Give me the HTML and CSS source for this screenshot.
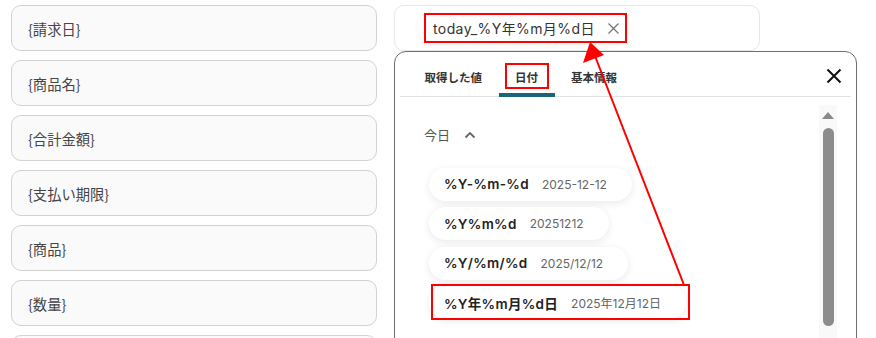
FILE: index.html
```html
<!DOCTYPE html>
<html lang="ja">
<head>
    <meta charset="UTF-8">
    <title>日付フォーマット</title>
    <link rel="stylesheet" href="styles.css">
</head>
<body>
    <div class="page">
        <div class="fields">
            <div class="field">{請求日}</div>
            <div class="field">{商品名}</div>
            <div class="field">{合計金額}</div>
            <div class="field">{支払い期限}</div>
            <div class="field">{商品}</div>
            <div class="field">{数量}</div>
            <div class="field"></div>
        </div>

        <div class="right">
            <div class="value-input">
                <span class="token">today_%Y年%m月%d日
                    <svg width="11" height="11" viewBox="0 0 11 11"><path d="M0.5 0.5 L10.5 10.5 M10.5 0.5 L0.5 10.5" stroke="#777" stroke-width="1.3" fill="none"/></svg>
                </span>
            </div>

            <div class="picker">
                <div class="tabs">
                    <div class="tab">取得した値</div>
                    <div class="tab active">日付</div>
                    <div class="tab">基本情報</div>
                    <button class="close" aria-label="閉じる">
                        <svg width="16" height="16" viewBox="0 0 16 16"><path d="M1.5 1.5 L14.5 14.5 M14.5 1.5 L1.5 14.5" stroke="#111" stroke-width="2" fill="none"/></svg>
                    </button>
                </div>
                <div class="picker-body">
                    <div class="list">
                        <div class="group-title">今日
                            <svg width="12" height="8" viewBox="0 0 12 8"><path d="M1.5 6.5 L6 2 L10.5 6.5" stroke="#666" stroke-width="1.8" fill="none"/></svg>
                        </div>
                        <div class="chip"><b>%Y-%m-%d</b><span>2025-12-12</span></div>
                        <div class="chip"><b>%Y%m%d</b><span>20251212</span></div>
                        <div class="chip"><b>%Y/%m/%d</b><span>2025/12/12</span></div>
                        <div class="chip"><b>%Y年%m月%d日</b><span>2025年12月12日</span></div>
                    </div>
                    <div class="scrollbar">
                        <div class="scroll-up"></div>
                        <div class="scroll-thumb"></div>
                    </div>
                </div>
            </div>
        </div>
    </div>

    <!-- annotations drawn over the screenshot -->
    <div class="mark mark-token"></div>
    <div class="mark mark-tab"></div>
    <div class="mark mark-chip"></div>
    <svg class="arrow" width="876" height="338" viewBox="0 0 876 338">
        <line x1="684" y1="285" x2="595" y2="56" stroke="#f00" stroke-width="2"/>
        <polygon points="590,42 604,55 583,63" fill="#f00"/>
    </svg>
</body>
</html>
```

FILE: styles.css
```css
body {
    margin: 0;
    height: 338px;
    overflow: hidden;
    background: #fff;
    font-family: Inter, "Noto Sans CJK JP", sans-serif;
    color: #333;
    position: relative;
}

.page {
    display: flex;
    align-items: flex-start;
    gap: 17px;
    padding: 5px 0 0 11px;
}

.fields {
    width: 366px;
    display: flex;
    flex-direction: column;
    gap: 9px;
}

.field {
    height: 46px;
    box-sizing: border-box;
    flex-shrink: 0;
    padding-left: 16px;
    display: flex;
    align-items: center;
    background: #fafafa;
    border: 1px solid #d2d2d2;
    border-radius: 10px;
    font-family: "Noto Sans CJK JP", sans-serif;
    font-size: 14.3px;
    color: #444;
}

.right {
    width: 463px;
    display: flex;
    flex-direction: column;
}

.value-input {
    width: 366px;
    height: 46px;
    box-sizing: border-box;
    border: 1px solid #e6e6e6;
    border-radius: 10px;
    display: flex;
    align-items: center;
    padding-left: 23px;
}

.token {
    display: flex;
    align-items: center;
    gap: 13px;
    height: 32px;
    padding: 0 10px 0 15px;
    border-radius: 16px;
    box-shadow: 0 1px 6px rgba(0, 0, 0, 0.06);
    font-size: 14px;
    letter-spacing: 0.4px;
    color: #333;
}

.picker {
    height: 300px;
    box-sizing: border-box;
    border: 1px solid #6e6e6e;
    border-radius: 12px;
    padding: 0 5px;
}

.tabs {
    display: flex;
    align-items: flex-end;
    height: 44px;
    padding-left: 8px;
    border-bottom: 1px solid #e2e2e2;
    position: relative;
}

.tab {
    padding: 0 16.5px 8px;
    font-size: 11.5px;
    font-weight: 600;
    color: #333;
    border-bottom: 4px solid transparent;
    margin-bottom: -1px;
}

.tab.active {
    border-bottom-color: #1b6378;
    border-radius: 3px 3px 0 0;
}

.close {
    position: absolute;
    right: 9px;
    top: 16px;
    background: none;
    border: none;
    padding: 0;
    width: 16px;
    height: 16px;
    cursor: pointer;
}

.picker-body {
    display: flex;
    justify-content: space-between;
}

.list {
    padding: 28px 0 0 24px;
    display: flex;
    flex-direction: column;
    align-items: flex-start;
    gap: 6.5px;
}

.group-title {
    display: flex;
    align-items: center;
    gap: 14px;
    font-family: "Noto Sans CJK JP", sans-serif;
    font-size: 13px;
    color: #555;
    margin-bottom: 17px;
}

.chip {
    display: flex;
    align-items: center;
    gap: 13px;
    height: 33px;
    padding: 0 25px 0 15px;
    margin-left: 5px;
    border-radius: 17px;
    background: #fff;
    box-shadow: 0 2px 9px rgba(0, 0, 0, 0.09);
}

.chip b {
    font-size: 13.5px;
    font-weight: 600;
    color: #222;
    letter-spacing: 0.3px;
}

.chip span {
    font-size: 12px;
    color: #666;
}

.scrollbar {
    width: 18px;
    margin: 8px 14px 0 0;
    height: 240px;
    background: #f9f9f9;
    display: flex;
    flex-direction: column;
    align-items: center;
}

.scroll-up {
    margin-top: 7px;
    width: 0;
    height: 0;
    border-left: 6px solid transparent;
    border-right: 6px solid transparent;
    border-bottom: 7px solid #8a8a8a;
}

.scroll-thumb {
    margin-top: 9px;
    width: 11px;
    height: 198px;
    border-radius: 6px;
    background: #8c8c8c;
}

.mark {
    position: absolute;
    border: 2px solid #f00;
    box-sizing: border-box;
}

.mark-token {
    left: 424px;
    top: 13px;
    width: 203px;
    height: 30px;
}

.mark-tab {
    left: 505px;
    top: 63px;
    width: 44px;
    height: 26px;
}

.mark-chip {
    left: 431px;
    top: 284px;
    width: 259px;
    height: 36px;
}

.arrow {
    position: absolute;
    left: 0;
    top: 0;
    pointer-events: none;
}
```
